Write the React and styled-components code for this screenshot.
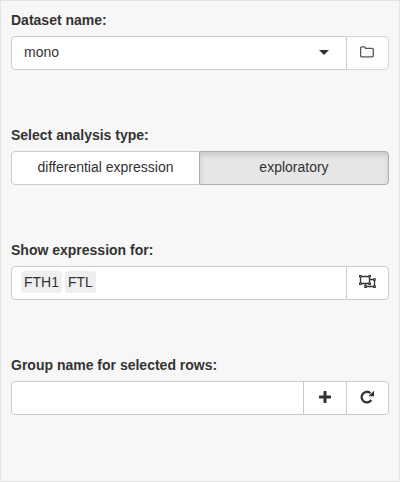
import React, { useState } from "react";
import styled, { createGlobalStyle, css } from "styled-components";

const GlobalStyle = createGlobalStyle`
  *, *::before, *::after { box-sizing: border-box; }
  body {
    margin: 0;
    background: #f7f7f7;
    color: #333;
    font: 14px/20px "Liberation Sans", Arial, sans-serif;
  }
`;

const Panel = styled.form`
  display: flex;
  flex-direction: column;
  gap: 55px;
  min-height: 100vh;
  padding: 9px 10px;
  border: 1px solid #e3e3e3;
  background: #f7f7f7;
`;

const Field = styled.div`
  display: flex;
  flex-direction: column;
  gap: 6px;
`;

const labelStyle = css`
  font-weight: 700;
  line-height: 20px;
`;

const Label = styled.label`
  ${labelStyle}
`;

const GroupLabel = styled.span`
  ${labelStyle}
`;

const ControlGroup = styled.div`
  display: flex;
  height: 34px;

  & > * + * { margin-left: -1px; }
  & > :first-child { border-radius: 4px 0 0 4px; }
  & > :last-child { border-radius: 0 4px 4px 0; }
`;

const boxStyle = css`
  border: 1px solid #ccc;
  background: #fff;
  color: #333;
  font: inherit;
`;

const SelectBox = styled.div`
  ${boxStyle}
  position: relative;
  flex: 1;
  min-width: 0;
`;

const Select = styled.select`
  appearance: none;
  width: 100%;
  height: 100%;
  padding: 0 32px 2px 12px;
  border: 0;
  background: transparent;
  color: inherit;
  font: inherit;
`;

const Caret = styled.span`
  position: absolute;
  top: 13px;
  right: 17px;
  border: 5px solid transparent;
  border-top-color: #333;
  border-bottom: 0;
  pointer-events: none;
`;

const TokenBox = styled.div`
  ${boxStyle}
  display: flex;
  flex: 1;
  align-items: center;
  gap: 3px;
  min-width: 0;
  padding: 0 9px 2px;
`;

const Token = styled.span`
  padding: 1px 3px;
  border-radius: 3px;
  background: #efefef;
`;

const TokenInput = styled.input`
  flex: 1;
  min-width: 0;
  border: 0;
  outline: 0;
  background: transparent;
  font: inherit;
`;

const TextInput = styled.input`
  ${boxStyle}
  flex: 1;
  min-width: 0;
  padding: 6px 12px;
`;

const IconButton = styled.button`
  ${boxStyle}
  display: flex;
  flex: none;
  align-items: center;
  justify-content: center;
  width: ${(p) => (p.$wide ? "44px" : "43px")};
  padding: ${(p) => (p.$wide ? "0 0 2px" : "0 1px 2px 0")};
  opacity: ${(p) => (p.$muted ? 0.75 : 1)};
`;

const ToggleButton = styled.button`
  ${boxStyle}
  flex: 0 0 50%;
  padding: 0 12px 2px;

  &:last-child { flex-grow: 1; }

  &[aria-pressed="true"] {
    z-index: 1;
    border-color: #adadad;
    background: #e6e6e6;
    box-shadow: inset 0 3px 5px rgba(0, 0, 0, 0.125);
  }
`;

const Icon = styled.svg`
  display: block;
  flex: none;
`;

const FolderIcon = () => (
  <Icon width="14" height="12" viewBox="0 0 14 12" fill="none" stroke="#222" strokeWidth="1.3" aria-hidden="true">
    <path d="M.6 9.5V2.1Q.6.8 1.900.8h2.500q1.200 0 1.200 1.600h6.300q1.400 0 1.400 1.300v5.800q0 1.400-1.400 1.400H1.900Q.6 10.900.6 9.500Z" />
  </Icon>
);

const UngroupIcon = () => (
  <Icon width="17" height="14" viewBox="0 0 17 14" aria-hidden="true">
    <g fill="none" stroke="#333" strokeWidth="1.3">
      <path d="M1.500 1.500h9v7h-9z" />
      <path d="M11 4.500h4.500v7h-9V9" />
    </g>
    <path
      fill="#333"
      d="M0 0h2.600v2.600H0zM9.400 0H12v2.600H9.400zM0 7.400h2.600V10H0zM9.400 7.400H12V10H9.400zM14.200 3.200h2.600v2.600h-2.600zM14.200 10.300h2.600v2.600h-2.600zM5.200 10.300h2.600v2.600H5.200z"
    />
    <path
      fill="#fff"
      fillOpacity=".6"
      d="M1 1h.8v.8H1zM10.300 1h.8v.8h-.8zM1 8.300h.8v.8H1zM10.300 8.300h.8v.8h-.8zM15.100 4.100h.8v.8h-.8zM15.100 11.200h.8v.8h-.8zM6.100 11.200h.8v.8h-.8z"
    />
  </Icon>
);

const PlusIcon = () => (
  <Icon width="12" height="12" viewBox="0 0 12 12" aria-hidden="true">
    <path
      fill="#333"
      d="M5 0h2q.5 0 .5.5v4h4q.5 0 .5.5v2q0 .5-.5.5h-4v4q0 .5-.5.5H5q-.5 0-.5-.5v-4h-4Q0 7.500 0 7V5q0-.5.5-.5h4v-4Q4.500 0 5 0Z"
    />
  </Icon>
);

const RepeatIcon = () => (
  <Icon width="14" height="14" viewBox="0 0 14 14" aria-hidden="true">
    <path d="M10.500 3.200A5.300 5.300 0 1 0 11.300 10" fill="none" stroke="#333" strokeWidth="2.300" />
    <path d="M14 .8v5.400H8.300Z" fill="#333" />
  </Icon>
);

const analysisTypes = ["differential expression", "exploratory"];
const genes = ["FTH1", "FTL"];

export default function App() {
  const [analysis, setAnalysis] = useState("exploratory");

  return (
    <>
      <GlobalStyle />
      <Panel onSubmit={(event) => event.preventDefault()}>
        <Field>
          <Label htmlFor="dataset">Dataset name:</Label>
          <ControlGroup>
            <SelectBox>
              <Select id="dataset" defaultValue="mono">
                <option value="mono">mono</option>
              </Select>
              <Caret />
            </SelectBox>
            <IconButton type="button" $muted aria-label="Browse datasets" disabled>
              <FolderIcon />
            </IconButton>
          </ControlGroup>
        </Field>

        <Field>
          <GroupLabel id="analysis-label">Select analysis type:</GroupLabel>
          <ControlGroup role="group" aria-labelledby="analysis-label">
            {analysisTypes.map((type) => (
              <ToggleButton
                key={type}
                type="button"
                aria-pressed={analysis === type}
                onClick={() => setAnalysis(type)}
              >
                {type}
              </ToggleButton>
            ))}
          </ControlGroup>
        </Field>

        <Field>
          <Label htmlFor="genes">Show expression for:</Label>
          <ControlGroup>
            <TokenBox>
              {genes.map((gene) => (
                <Token key={gene}>{gene}</Token>
              ))}
              <TokenInput id="genes" type="text" />
            </TokenBox>
            <IconButton type="button" aria-label="Ungroup">
              <UngroupIcon />
            </IconButton>
          </ControlGroup>
        </Field>

        <Field>
          <Label htmlFor="group-name">Group name for selected rows:</Label>
          <ControlGroup>
            <TextInput id="group-name" type="text" />
            <IconButton type="button" $wide aria-label="Add group">
              <PlusIcon />
            </IconButton>
            <IconButton type="button" aria-label="Reset groups">
              <RepeatIcon />
            </IconButton>
          </ControlGroup>
        </Field>
      </Panel>
    </>
  );
}
